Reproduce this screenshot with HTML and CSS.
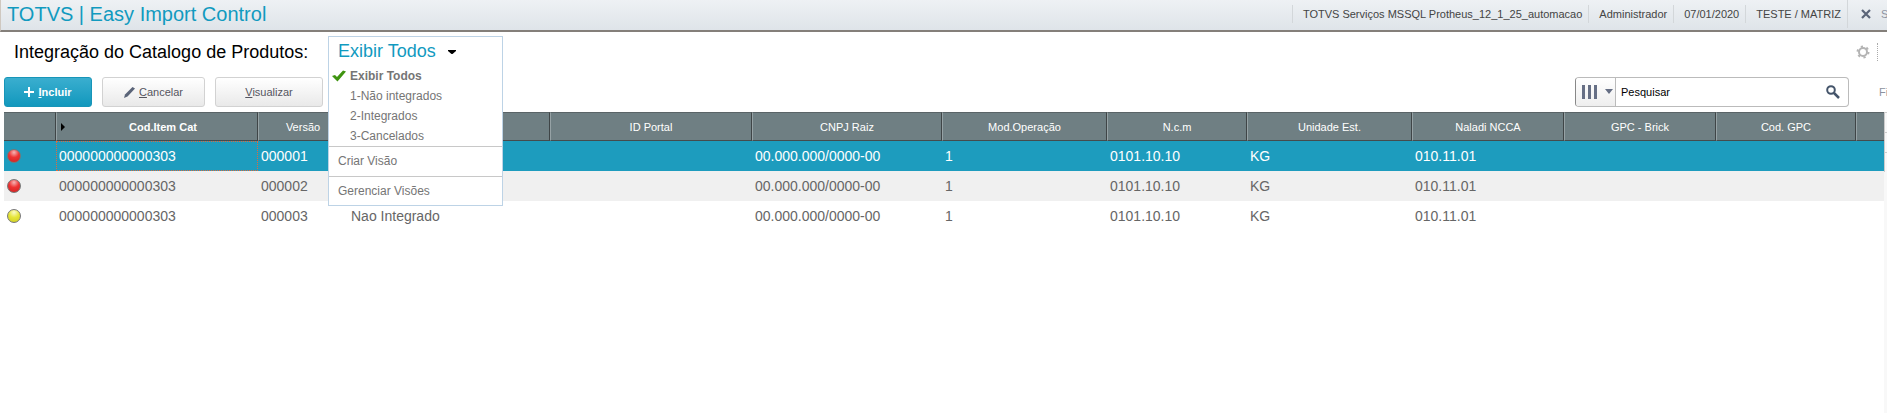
FILE: index.html
```
<!DOCTYPE html>
<html lang="pt-BR">
<head>
  <meta charset="UTF-8" />
  <meta name="viewport" content="width=device-width, initial-scale=1.0"/>
  <title>TOTVS | Easy Import Control</title>
  <link rel="stylesheet" href="styles.css">
</head>
<body>
  <header class="topbar">
    <h1>TOTVS | Easy Import Control</h1>
    <ul class="session">
      <li>TOTVS Serviços MSSQL Protheus_12_1_25_automacao</li>
      <li>Administrador</li>
      <li>07/01/2020</li>
      <li>TESTE / MATRIZ</li>
    </ul>
    <button class="exit" type="button">
      <svg width="10" height="10" viewBox="0 0 10 10"><path d="M1 1l8 8M9 1l-8 8" stroke="#5a6478" stroke-width="2.200"/></svg>
      S
    </button>
  </header>

  <div class="titlebar">
    <h2>Integração do Catalogo de Produtos:</h2>
    <div class="view-menu">
      <button class="view-current" type="button">
        Exibir Todos
        <svg width="8" height="4" viewBox="0 0 8 4"><path d="M0 0h8v1L4.500 4h-1L0 1z" fill="#000"/></svg>
      </button>
      <ul class="view-list">
        <li class="selected">
          <svg width="14" height="12" viewBox="0 0 14 12"><path d="M0 6l3-1 2 2 6-6.500 3 1L5.500 11.500z" fill="#3f9410"/></svg>
          <a href="#">Exibir Todos</a>
        </li>
        <li><a href="#">1-Não integrados</a></li>
        <li><a href="#">2-Integrados</a></li>
        <li><a href="#">3-Cancelados</a></li>
      </ul>
      <a class="view-action" href="#">Criar Visão</a>
      <a class="view-action" href="#">Gerenciar Visões</a>
    </div>
    <button class="settings" type="button" aria-label="Configurações">
      <svg width="14" height="14" viewBox="0 0 14 14" fill="none" stroke="#b4b4b4">
        <circle cx="7" cy="7" r="4" stroke-width="2"/>
        <circle cx="7" cy="7" r="5.500" stroke-width="2" stroke-dasharray="2.200 3.560"/>
      </svg>
    </button>
  </div>

  <div class="toolbar">
    <button class="btn btn-primary" type="button">
      <svg width="10" height="10" viewBox="0 0 10 10"><path d="M5 0v10M0 5h10" stroke="#fff" stroke-width="2"/></svg>
      <span><u>I</u>ncluir</span>
    </button>
    <button class="btn btn-cancel" type="button">
      <svg width="11" height="11" viewBox="0 0 11 11"><path d="M0 11l1-3.500L8.500 0 11 1.500 3.500 9.500z" fill="#5a6478"/></svg>
      <span><u>C</u>ancelar</span>
    </button>
    <button class="btn btn-view" type="button"><span><u>V</u>isualizar</span></button>

    <form class="search">
      <button class="search-columns" type="button" aria-label="Colunas">
        <svg width="31" height="14" viewBox="0 0 31 14" fill="#666f85"><path d="M0 0h3v14H0zM6 0h3v14H6zM12 0h3v14h-3zM23 4h8l-4 5z"/></svg>
      </button>
      <input type="text" value="Pesquisar" aria-label="Pesquisar">
      <button class="search-go" type="button" aria-label="Buscar">
        <svg width="14" height="14" viewBox="0 0 14 14" fill="none" stroke="#44546a"><circle cx="5" cy="5" r="3.800" stroke-width="2"/><path d="M8 8l5 5" stroke-width="2.500"/></svg>
      </button>
    </form>
    <a class="filter" href="#">Fi</a>
  </div>

  <main class="content">
    <table class="grid">
      <colgroup>
        <col class="w-status"><col class="w-code"><col class="w-version"><col class="w-state"><col class="w-code">
        <col class="w-cnpj"><col class="w-mode"><col class="w-ncm"><col class="w-mode"><col class="w-naladi">
        <col class="w-naladi"><col class="w-ncm"><col>
      </colgroup>
      <thead>
        <tr>
          <th></th>
          <th class="sorted">Cod.Item Cat</th>
          <th>Versão</th>
          <th></th>
          <th>ID Portal</th>
          <th>CNPJ Raiz</th>
          <th>Mod.Operação</th>
          <th>N.c.m</th>
          <th>Unidade Est.</th>
          <th>Naladi NCCA</th>
          <th>GPC - Brick</th>
          <th>Cod. GPC</th>
          <th></th>
        </tr>
      </thead>
      <tbody>
        <tr class="active">
          <td><span class="dot red"></span></td>
          <td class="focused">000000000000303</td>
          <td>000001</td>
          <td></td>
          <td></td>
          <td>00.000.000/0000-00</td>
          <td>1</td>
          <td>0101.10.10</td>
          <td>KG</td>
          <td>010.11.01</td>
          <td></td>
          <td></td>
          <td></td>
        </tr>
        <tr class="odd">
          <td><span class="dot red"></span></td>
          <td>000000000000303</td>
          <td>000002</td>
          <td></td>
          <td></td>
          <td>00.000.000/0000-00</td>
          <td>1</td>
          <td>0101.10.10</td>
          <td>KG</td>
          <td>010.11.01</td>
          <td></td>
          <td></td>
          <td></td>
        </tr>
        <tr>
          <td><span class="dot yellow"></span></td>
          <td>000000000000303</td>
          <td>000003</td>
          <td>Nao Integrado</td>
          <td></td>
          <td>00.000.000/0000-00</td>
          <td>1</td>
          <td>0101.10.10</td>
          <td>KG</td>
          <td>010.11.01</td>
          <td></td>
          <td></td>
          <td></td>
        </tr>
      </tbody>
    </table>
    <aside class="side">
      <div class="side-box"></div>
      <div class="side-box"></div>
      <div class="side-box"></div>
    </aside>
  </main>
</body>
</html>
```
FILE: styles.css
```
* { box-sizing: border-box; }
body {
  display: flex;
  flex-direction: column;
  min-height: 100vh;
  margin: 0;
  background: #fff;
  font-family: "Liberation Sans", Arial, sans-serif;
  font-size: 11px;
  color: #444;
  overflow: hidden;
}
h1, h2, ul {
  margin: 0;
  padding: 0;
  font-weight: normal;
  list-style: none;
}
button, input {
  font-family: inherit;
  font-size: inherit;
}
svg { display: block; flex: none; }
a { color: inherit; text-decoration: none; }

.topbar {
  display: flex;
  align-items: center;
  height: 32px;
  padding-left: 6px;
  padding-bottom: 2px;
  background: linear-gradient(#eef1f4, #dfe4e9);
  border-left: 1px solid #cfc8c0;
  border-bottom: 2px solid #847f7a;
  white-space: nowrap;
}
.topbar h1 {
  font-size: 20px;
  line-height: 28px;
  color: #119abf;
}
.session {
  display: flex;
  margin-left: auto;
}
.session li {
  padding: 0 6px 0 10px;
  line-height: 18px;
  border-left: 1px solid #d3d7da;
}
.exit {
  display: flex;
  align-items: center;
  gap: 10px;
  height: 28px;
  width: 40px;
  padding: 0 0 0 13px;
  border: 0;
  border-left: 1px solid #d3d7da;
  background: none;
  color: #8d93a1;
}

.titlebar {
  position: relative;
  display: flex;
  align-items: center;
  height: 40px;
  padding-left: 14px;
}
.titlebar h2 {
  font-size: 18px;
  color: #000;
}
.view-menu {
  position: absolute;
  left: 328px;
  top: 4px;
  z-index: 1;
  width: 175px;
  background: #fff;
  border: 1px solid #bdd3e6;
  font-size: 12px;
  color: #757575;
}
.view-current {
  display: flex;
  align-items: center;
  gap: 12px;
  height: 29px;
  padding: 0 9px;
  border: 0;
  background: none;
  font-size: 18px;
  color: #119abf;
}
.view-list li {
  display: flex;
  align-items: center;
  height: 20px;
  padding-left: 21px;
}
.view-list .selected {
  gap: 4px;
  padding-left: 3px;
  font-weight: bold;
}
.view-action {
  display: block;
  padding-left: 9px;
  line-height: 29px;
  border-top: 1px solid #c8c8c8;
}
.view-action:last-child { line-height: 28px; }
.settings {
  height: 18px;
  margin-left: auto;
  margin-right: 9px;
  padding: 0 7px 0 0;
  border: 0;
  border-right: 1px dotted #aaa;
  background: none;
}

.toolbar {
  display: flex;
  align-items: center;
  gap: 10px;
  height: 40px;
  padding-left: 4px;
  white-space: nowrap;
}
.btn {
  display: flex;
  align-items: center;
  justify-content: center;
  gap: 4px;
  height: 30px;
  border: 1px solid #d2d2d2;
  border-radius: 3px;
  background: linear-gradient(#fff, #e9e9e9);
  color: #55555f;
}
.btn-primary {
  width: 88px;
  border-color: #1795b8;
  background: linear-gradient(#3aaecf, #1298bd);
  color: #fff;
  font-weight: bold;
}
.btn-cancel { width: 103px; }
.btn-view { width: 108px; }
.search {
  display: flex;
  align-items: center;
  width: 274px;
  height: 30px;
  margin-left: auto;
  border: 1px solid #bbb;
  border-left-color: #888;
  border-radius: 4px;
  overflow: hidden;
}
.search-columns {
  height: 28px;
  width: 40px;
  padding: 0 0 0 6px;
  border: 0;
  border-right: 1px solid #bbb;
  background: linear-gradient(#fff, #eee);
}
.search input {
  flex: 1;
  min-width: 0;
  padding: 0 5px;
  border: 0;
  color: #000;
}
.search-go {
  padding: 0 8px;
  border: 0;
  background: none;
}
.filter {
  width: 8px;
  margin-left: 20px;
  color: #8c92a0;
}

.content {
  display: flex;
  flex: 1;
  align-items: flex-start;
  padding-left: 4px;
}
.grid {
  flex: 1;
  width: 100%;
  table-layout: fixed;
  border-collapse: separate;
  border-spacing: 0;
}
.w-status { width: 52px; }
.w-code { width: 202px; }
.w-version { width: 90px; }
.w-state { width: 202px; }
.w-cnpj { width: 190px; }
.w-mode { width: 165px; }
.w-ncm { width: 140px; }
.w-naladi { width: 152px; }
.grid th {
  height: 29px;
  padding: 0;
  background: #6f7f83;
  border-top: 1px solid #5a6467;
  border-bottom: 1px solid #454b4d;
  border-right: 1px solid #3f4547;
  border-left: 1px solid #96a2a5;
  font-weight: normal;
  color: #fff;
}
.grid th:first-child { border-left: 0; }
.grid th:last-child { border-right: 0; }
.grid .sorted {
  position: relative;
  padding-left: 12px;
  font-weight: bold;
}
.sorted::before {
  content: "";
  position: absolute;
  left: 4px;
  top: 10px;
  border: 4px solid transparent;
  border-left-color: #000;
  border-right: 0;
}
.grid td {
  height: 30px;
  padding: 0 3px;
  font-size: 14px;
  color: #666;
  white-space: nowrap;
}
.grid .odd td { background: #f0f0f0; }
.grid .active td {
  background: #1d9cbe;
  color: #fff;
}
.grid .focused { outline: 1px dotted #e0693e; outline-offset: -1px; }
.dot {
  display: block;
  width: 14px;
  height: 14px;
  border: 1px solid #777;
  border-radius: 50%;
}
.red { background: radial-gradient(circle at 50% 20%, #f5b5b5, #e33 45%, #c22); }
.yellow { background: radial-gradient(circle at 50% 20%, #fafaca, #e6e63a 45%, #cdcd20); }

.side {
  align-self: stretch;
  width: 3px;
  background: #f8f8f8;
}
.side-box {
  height: 20px;
  border-top: 1px solid #ccc;
  border-left: 1px solid #ccc;
}
```
